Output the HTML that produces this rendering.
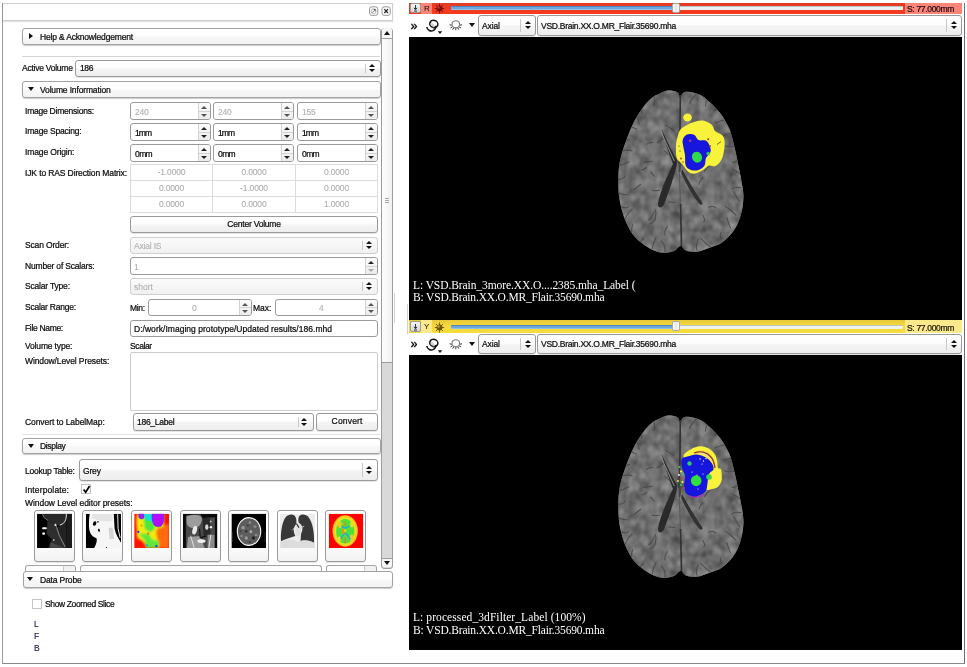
<!DOCTYPE html>
<html><head><meta charset="utf-8"><title>Volumes</title>
<style>
html,body{margin:0;padding:0;}
body{width:967px;height:667px;position:relative;overflow:hidden;background:#fff;font-family:"Liberation Sans",sans-serif;font-size:8.5px;letter-spacing:-0.17px;color:#0a0a0a;-webkit-text-stroke:0.22px #0a0a0a;}
.a{position:absolute;box-sizing:border-box;}
.t{position:absolute;white-space:nowrap;line-height:10px;}
.w{position:absolute;box-sizing:border-box;border:1px solid #9a9a9a;border-radius:3px;background:#fff;}
.btn{background:linear-gradient(#ffffff,#fdfdfd 45%,#f4f4f4 55%,#ededed);box-shadow:0 1px 0.5px rgba(0,0,0,0.10);}
.hdr{position:absolute;box-sizing:border-box;border:1px solid #a2a2a2;border-radius:3px;background:linear-gradient(#ffffff,#fefefe 45%,#f7f7f7 55%,#f3f3f3);box-shadow:0 1px 1px rgba(0,0,0,0.2);}
.dis{color:#b0b0b0;-webkit-text-stroke:0.1px #b0b0b0;}
.sp{position:absolute;right:0;top:0;bottom:0;width:11px;border-left:1px solid #d2d2d2;background:linear-gradient(#fcfcfc,#ececec);border-radius:0 2px 2px 0;}
.sp:before{content:"";position:absolute;left:2px;top:2.6px;border:3px solid transparent;border-top:0;border-bottom:3.3px solid #222;}
.sp:after{content:"";position:absolute;left:2px;bottom:2.4px;border:3px solid transparent;border-bottom:0;border-top:3.3px solid #222;}
.sp i{position:absolute;left:0;right:0;top:50%;height:1px;background:#d2d2d2;margin-top:-0.5px;}
.sp.d1:before{border-bottom-color:#555;}.sp.d1:after{border-top-color:#555;}
.sp.d2:after{border-top-color:#aaa;}
.cb{position:absolute;right:14px;top:3px;bottom:3px;width:1px;background:#c8c8c8;}
.cbu{position:absolute;right:5.5px;top:50%;margin-top:-4.4px;border:3px solid transparent;border-top:0;border-bottom:3.5px solid #111;}
.cbd{position:absolute;right:5.5px;top:50%;margin-top:0.9px;border:3px solid transparent;border-bottom:0;border-top:3.5px solid #111;}
.tb{background:linear-gradient(#fff,#fefefe 60%,#f2f2f2);}
.wd{border-color:#cfcfcf;background:linear-gradient(#fbfbfb,#f1f1f1);}
.cell{position:absolute;box-sizing:border-box;border-right:1px solid #dcdcdc;border-bottom:1px solid #dcdcdc;color:#adadad;-webkit-text-stroke:0.1px #adadad;text-align:center;line-height:15px;}
.vt{position:absolute;white-space:nowrap;color:#fff;-webkit-text-stroke:0;font-family:"Liberation Serif",serif;font-size:11.5px;letter-spacing:0;line-height:12px;}
#root{position:absolute;left:0;top:0;width:967px;height:667px;will-change:transform;background:#fff;overflow:hidden;}
</style></head><body><div id="root">

<!-- outer frame -->
<div class="a" style="left:2px;top:3px;width:963px;height:661px;border-left:1px solid #9a9a9a;border-bottom:1px solid #8a8a8a;border-right:1.5px solid #666b90;"></div>
<!-- dock title bar -->
<div class="a" style="left:3px;top:3px;width:390px;height:18px;border:1px solid #cfcfcf;border-left:0;box-shadow:0 1px 1px rgba(0,0,0,0.12);background:#fff;"></div>
<svg class="a" style="left:368px;top:5px;" width="24" height="12" viewBox="368 5 24 12">
 <rect x="369.500" y="6.800" width="8.300" height="8.600" rx="2.400" fill="#fbfbfb" stroke="#8e8e8e" stroke-width="0.900"/>
 <circle cx="373.600" cy="11.200" r="2.500" fill="none" stroke="#aaa" stroke-width="0.800"/>
 <path d="M372.300 12.600 L375.300 9.600 M373.600 9.500 H375.400 V11.300" fill="none" stroke="#666" stroke-width="0.900"/>
 <rect x="382" y="6.800" width="8.300" height="8.600" rx="2.400" fill="#fbfbfb" stroke="#8e8e8e" stroke-width="0.900"/>
 <path d="M384.300 9.200 L388 13 M388 9.200 L384.300 13" fill="none" stroke="#222" stroke-width="1.200"/>
</svg>

<!-- LEFT PANEL placeholder -->
<!-- LEFT PANEL -->
<div class="hdr" style="left:22px;top:28px;width:359px;height:17px;"></div>
<div class="a" style="left:29px;top:33.3px;border:3.5px solid transparent;border-right:0;border-left:4.4px solid #111;"></div>
<div class="t" style="left:40px;top:32px;letter-spacing:-0.18px;">Help &amp; Acknowledgement</div>
<div class="a" style="left:22px;top:55.500px;width:358px;height:1px;background:#d4d4d4;"></div>

<div class="t" style="left:22px;top:63px;letter-spacing:-0.25px;">Active Volume</div>
<div class="w btn" style="left:75px;top:60px;width:306px;height:17px;"><i class="cb"></i><i class="cbu"></i><i class="cbd"></i></div>
<div class="t" style="left:80px;top:63px;letter-spacing:-0.39px;">186</div>

<div class="hdr" style="left:22px;top:81px;width:359px;height:17px;"></div>
<div class="a" style="left:28.1px;top:87px;border:3.3px solid transparent;border-bottom:0;border-top:4.2px solid #111;"></div>
<div class="t" style="left:40px;top:84.5px;letter-spacing:-0.15px;">Volume Information</div>

<div class="t" style="left:25px;top:105.5px;letter-spacing:-0.23px;">Image Dimensions:</div>
<div class="w" style="left:130px;top:102px;width:81px;height:18px;"><span class="sp d1"><i></i></span></div>
<div class="w" style="left:213px;top:102px;width:81px;height:18px;"><span class="sp d1"><i></i></span></div>
<div class="w" style="left:297px;top:102px;width:81px;height:18px;"><span class="sp d1"><i></i></span></div>
<div class="t dis" style="left:135px;top:107px;letter-spacing:-0.26px;">240</div>
<div class="t dis" style="left:218px;top:107px;letter-spacing:-0.26px;">240</div>
<div class="t dis" style="left:302px;top:107px;letter-spacing:-0.26px;">155</div>

<div class="t" style="left:25px;top:126.3px;letter-spacing:-0.18px;">Image Spacing:</div>
<div class="w" style="left:130px;top:123px;width:81px;height:18px;"><span class="sp"><i></i></span></div>
<div class="w" style="left:213px;top:123px;width:81px;height:18px;"><span class="sp"><i></i></span></div>
<div class="w" style="left:297px;top:123px;width:81px;height:18px;"><span class="sp"><i></i></span></div>
<div class="t" style="left:135px;top:128px;letter-spacing:-0.90px;">1mm</div>
<div class="t" style="left:218px;top:128px;letter-spacing:-0.90px;">1mm</div>
<div class="t" style="left:302px;top:128px;letter-spacing:-0.90px;">1mm</div>

<div class="t" style="left:25px;top:147px;letter-spacing:-0.13px;">Image Origin:</div>
<div class="w" style="left:130px;top:144px;width:81px;height:18px;"><span class="sp"><i></i></span></div>
<div class="w" style="left:213px;top:144px;width:81px;height:18px;"><span class="sp"><i></i></span></div>
<div class="w" style="left:297px;top:144px;width:81px;height:18px;"><span class="sp"><i></i></span></div>
<div class="t" style="left:135px;top:148.6px;letter-spacing:-0.60px;">0mm</div>
<div class="t" style="left:218px;top:148.6px;letter-spacing:-0.60px;">0mm</div>
<div class="t" style="left:302px;top:148.6px;letter-spacing:-0.60px;">0mm</div>

<div class="t" style="left:25px;top:168px;letter-spacing:-0.12px;">IJK to RAS Direction Matrix:</div>
<div class="a" style="left:130px;top:164.300px;width:248px;height:49px;border-left:1px solid #dcdcdc;border-top:1px solid #dcdcdc;background:#fff;">
 <div class="cell" style="left:0;top:0;width:82px;height:16px;">-1.0000</div><div class="cell" style="left:82px;top:0;width:83px;height:16px;">0.0000</div><div class="cell" style="left:165px;top:0;width:82px;height:16px;">0.0000</div>
 <div class="cell" style="left:0;top:16px;width:82px;height:16px;">0.0000</div><div class="cell" style="left:82px;top:16px;width:83px;height:16px;">-1.0000</div><div class="cell" style="left:165px;top:16px;width:82px;height:16px;">0.0000</div>
 <div class="cell" style="left:0;top:32px;width:82px;height:16px;">0.0000</div><div class="cell" style="left:82px;top:32px;width:83px;height:16px;">0.0000</div><div class="cell" style="left:165px;top:32px;width:82px;height:16px;">1.0000</div>
</div>

<div class="w btn" style="left:130px;top:216px;width:248px;height:17px;text-align:center;line-height:15px;letter-spacing:-0.22px;">Center Volume</div>

<div class="t" style="left:25px;top:239.5px;letter-spacing:-0.16px;">Scan Order:</div>
<div class="w wd" style="left:130px;top:237px;width:248px;height:17px;"><i class="cb"></i><i class="cbu"></i><i class="cbd"></i></div>
<div class="t dis" style="left:134px;top:241px;letter-spacing:-0.19px;">Axial IS</div>

<div class="t" style="left:25px;top:260.5px;letter-spacing:-0.18px;">Number of Scalars:</div>
<div class="w" style="left:130px;top:257px;width:248px;height:18px;"><span class="sp d2"><i></i></span></div>
<div class="t dis" style="left:134px;top:262px;">1</div>

<div class="t" style="left:25px;top:281px;letter-spacing:-0.19px;">Scalar Type:</div>
<div class="w wd" style="left:130px;top:278px;width:248px;height:17px;"><i class="cb"></i><i class="cbu"></i><i class="cbd"></i></div>
<div class="t dis" style="left:134px;top:282px;letter-spacing:0.02px;">short</div>

<div class="t" style="left:25px;top:302.3px;letter-spacing:-0.23px;">Scalar Range:</div>
<div class="t" style="left:130px;top:302.5px;letter-spacing:-0.32px;">Min:</div>
<div class="w" style="left:148px;top:299px;width:103.600px;height:17px;"><span class="sp d1"><i></i></span></div>
<div class="t dis" style="left:192px;top:303px;">0</div>
<div class="t" style="left:253px;top:302.5px;letter-spacing:-0.06px;">Max:</div>
<div class="w" style="left:274.500px;top:299px;width:103.500px;height:17px;"><span class="sp d1"><i></i></span></div>
<div class="t dis" style="left:319px;top:303px;">4</div>

<div class="t" style="left:25px;top:322.7px;letter-spacing:-0.32px;">File Name:</div>
<div class="w" style="left:130px;top:320px;width:248px;height:17px;"></div>
<div class="t" style="left:134px;top:324px;letter-spacing:0.03px;">D:/work/Imaging prototype/Updated results/186.mhd</div>

<div class="t" style="left:25px;top:340.7px;letter-spacing:-0.16px;">Volume type:</div>
<div class="t" style="left:130px;top:340.7px;letter-spacing:-0.38px;">Scalar</div>

<div class="t" style="left:25px;top:356px;letter-spacing:-0.11px;">Window/Level Presets:</div>
<div class="a" style="left:130px;top:352px;width:248px;height:59px;border:1px solid #cdcdcd;border-radius:2px;background:#fff;"></div>

<div class="t" style="left:25px;top:417px;letter-spacing:-0.08px;">Convert to LabelMap:</div>
<div class="w btn" style="left:133px;top:413.300px;width:180.500px;height:17.300px;"><i class="cb"></i><i class="cbu"></i><i class="cbd"></i></div>
<div class="t" style="left:137px;top:417px;letter-spacing:-0.27px;">186_Label</div>
<div class="w btn" style="left:316.400px;top:413.300px;width:61.400px;height:17.300px;text-align:center;line-height:15.500px;letter-spacing:0.18px;">Convert</div>

<div class="a" style="left:22px;top:434px;width:358px;height:1px;background:#e2e2e2;"></div>
<div class="hdr" style="left:22px;top:437.500px;width:359px;height:16px;"></div>
<div class="a" style="left:27.6px;top:443.8px;border:3.3px solid transparent;border-bottom:0;border-top:4.2px solid #111;"></div>
<div class="t" style="left:40px;top:441px;letter-spacing:-0.34px;">Display</div>

<div class="t" style="left:25px;top:465.5px;letter-spacing:-0.24px;">Lookup Table:</div>
<div class="w btn" style="left:79px;top:459px;width:299px;height:22px;"><i class="cb"></i><i class="cbu"></i><i class="cbd"></i></div>
<div class="t" style="left:83px;top:465.5px;letter-spacing:-0.18px;">Grey</div>

<div class="t" style="left:25px;top:484.5px;letter-spacing:0.13px;">Interpolate:</div>
<div class="a" style="left:80.500px;top:484.300px;width:10px;height:10px;border:1px solid #c2c2c2;background:#fff;"></div>
<svg class="a" style="left:80.500px;top:484px;" width="11" height="11" viewBox="0 0 11 11"><path d="M2.600 5.400 L4.700 8.200 L8.600 2" fill="none" stroke="#000" stroke-width="1.700"/></svg>
<div class="t" style="left:25px;top:498px;letter-spacing:-0.06px;">Window Level editor presets:</div>
<!-- thumbnails -->
<div class="w btn tb" style="left:34px;top:510px;width:41px;height:52px;"></div>
<div class="w btn tb" style="left:82px;top:510px;width:41px;height:52px;"></div>
<div class="w btn tb" style="left:131px;top:510px;width:41px;height:52px;"></div>
<div class="w btn tb" style="left:180px;top:510px;width:41px;height:52px;"></div>
<div class="w btn tb" style="left:228px;top:510px;width:41px;height:52px;"></div>
<div class="w btn tb" style="left:277px;top:510px;width:41px;height:52px;"></div>
<div class="w btn tb" style="left:325px;top:510px;width:41px;height:52px;"></div>
<svg class="a" style="left:0;top:500px;" width="400" height="60" viewBox="0 500 400 60">
 <defs>
  <filter id="tb1" x="-5%" y="-5%" width="110%" height="110%"><feGaussianBlur stdDeviation="4"/></filter>
  <filter id="tb2" x="-5%" y="-5%" width="110%" height="110%"><feGaussianBlur stdDeviation="9"/></filter>
  <clipPath id="k1"><rect x="68" y="55" width="337" height="333"/></clipPath>
  <clipPath id="k2"><rect x="540" y="55" width="340" height="333"/></clipPath>
  <clipPath id="k3"><rect x="60" y="55" width="337" height="333"/></clipPath>
  <clipPath id="k4"><rect x="530" y="55" width="335" height="333"/></clipPath>
  <clipPath id="k5"><rect x="72" y="55" width="335" height="333"/></clipPath>
  <clipPath id="k6"><rect x="540" y="55" width="340" height="333"/></clipPath>
  <clipPath id="k7"><rect x="278" y="55" width="334" height="333"/></clipPath>
 </defs>
 <!-- 1+2 -->
 <g transform="translate(30 508) scale(0.10341)">
  <g clip-path="url(#k1)"><rect x="68" y="55" width="337" height="333" fill="#000"/>
   <g filter="url(#tb1)">
    <path d="M120 55 L350 55 C352 100 345 130 300 165 L250 172 L170 122 L130 90Z" fill="#2b2b2b"/>
    <path d="M170 120 L250 172 L285 270 L345 388 L180 388 L210 300 L160 250Z" fill="#2e2e2e"/>
    <rect x="352" y="55" width="53" height="333" fill="#1c1c1c"/><path d="M290 168 L350 125 L352 388 L345 388 L282 262 L258 190Z" fill="#242424"/>
    <path d="M352 55 C352 105 345 128 318 152 L288 166" fill="none" stroke="#f0f0f0" stroke-width="9"/>
    <path d="M120 58 L135 92 L175 122" fill="none" stroke="#999" stroke-width="6"/>
    <path d="M245 150 L258 190 L282 262 L340 378" fill="none" stroke="#b8b8b8" stroke-width="7"/>
    <rect x="118" y="186" width="44" height="20" rx="8" fill="#fff"/><rect x="118" y="236" width="28" height="22" rx="8" fill="#fff"/>
    <circle cx="230" cy="310" r="8" fill="#ddd"/><circle cx="245" cy="165" r="10" fill="#eee"/>
    <path d="M200 330 L330 385 L190 385Z" fill="#484848"/>
   </g></g>
  <g clip-path="url(#k2)"><rect x="540" y="55" width="340" height="333" fill="#f6f6f6"/>
   <g filter="url(#tb1)">
    <path d="M600 55 L800 55 L800 120 C740 140 660 120 600 100Z" fill="#e4e4e4"/>
    <path d="M760 190 L800 190 L815 300 L770 300Z" fill="#d4d4d4"/>
    <path d="M540 55 L578 55 C568 100 570 160 572 200 C580 250 600 275 640 290 C655 310 640 350 620 388 L540 388Z" fill="#000"/>
    <path d="M810 55 L880 55 L880 335 C860 300 830 260 818 200Z" fill="#000"/>
    <path d="M848 60 L852 200 L872 290" fill="none" stroke="#fff" stroke-width="9"/>
    <ellipse cx="625" cy="150" rx="16" ry="22" fill="#000" transform="rotate(20 625 150)"/><circle cx="657" cy="134" r="8" fill="#111"/>
    <ellipse cx="667" cy="215" rx="10" ry="15" fill="#111" transform="rotate(-20 667 215)"/><circle cx="740" cy="383" r="7" fill="#222"/>
   </g></g>
 </g>
 <!-- 3+4 -->
 <g transform="translate(128 508) scale(0.10341)">
  <g clip-path="url(#k3)"><rect x="60" y="55" width="337" height="333" fill="#ff1200"/>
   <g filter="url(#tb2)">
    <path d="M270 190 L397 150 L397 388 L300 388Z" fill="#ff6a10"/>
    <path d="M88 60 L350 60 L345 180 L280 200 C262 250 300 320 300 388 L175 388 C170 330 120 310 90 290 C80 250 95 230 85 200 C80 150 80 100 88 60Z" fill="#f4ea10"/>
    <path d="M150 100 L250 100 L262 200 L215 240 L160 200Z" fill="#4ee83a"/>
    <path d="M100 250 L200 245 L230 300 L300 320 L295 388 L180 388 L160 310Z" fill="#5ee83a"/>
   </g>
   <g filter="url(#tb1)">
    <path d="M150 58 L240 58 L250 130 L170 120Z" fill="#18e0d0"/>
    <path d="M105 55 L150 55 L155 95 C140 112 112 108 105 90Z" fill="#b410ff" stroke="#2030ff" stroke-width="6"/>
    <path d="M235 55 L345 55 C350 100 345 150 320 175 C290 190 255 180 245 150 C235 120 230 90 235 55Z" fill="#b410ff" stroke="#2030ff" stroke-width="6"/>
    <circle cx="100" cy="230" r="11" fill="#1828ff"/><circle cx="185" cy="360" r="10" fill="#10a0ff"/><circle cx="275" cy="368" r="11" fill="#1838ff"/>
    <circle cx="130" cy="170" r="10" fill="#ff8a10"/><circle cx="195" cy="248" r="10" fill="#ff7010"/>
   </g></g>
  <g clip-path="url(#k4)"><rect x="530" y="55" width="335" height="333" fill="#0a0a0a"/>
   <g filter="url(#tb1)">
    <path d="M560 70 L700 60 L720 100 L840 90 L842 388 L560 388Z" fill="#4a4a4a"/>
    <path d="M565 90 C580 60 690 55 712 90 C720 130 700 180 660 190 C620 200 580 190 568 150Z" fill="#9c9c9c"/>
    <path d="M720 100 L790 90 L800 250 L730 270Z" fill="#2a2a2a"/>
    <path d="M580 280 L700 270 L740 388 L570 388Z" fill="#9a9a9a"/><path d="M770 260 L835 260 L835 388 L770 388Z" fill="#8a8a8a"/>
    <ellipse cx="645" cy="215" rx="22" ry="42" fill="#e8e8e8" transform="rotate(15 645 215)"/>
    <ellipse cx="762" cy="185" rx="16" ry="28" fill="#d8d8d8"/><circle cx="802" cy="185" r="12" fill="#f4f4f4"/><circle cx="800" cy="130" r="10" fill="#bbb"/>
    <ellipse cx="710" cy="320" rx="40" ry="18" fill="#f0f0f0"/><path d="M700 290 L760 270" stroke="#111" stroke-width="14"/>
    <path d="M605 268 L640 385 M802 258 L782 385" fill="none" stroke="#e4e4e4" stroke-width="9"/>
    <path d="M690 200 L700 290" stroke="#1a1a1a" stroke-width="14"/>
   </g></g>
 </g>
 <!-- 5+6 -->
 <g transform="translate(224 508) scale(0.10341)">
  <g clip-path="url(#k5)"><rect x="72" y="55" width="335" height="333" fill="#000"/>
   <ellipse cx="242" cy="227" rx="113" ry="134" fill="#5e5e5e" stroke="#fafafa" stroke-width="11"/>
   <g filter="url(#tb1)">
    <circle cx="185" cy="190" r="16" fill="#9a9a9a"/><circle cx="260" cy="230" r="14" fill="#a8a8a8"/><circle cx="215" cy="290" r="16" fill="#9a9a9a"/><circle cx="300" cy="180" r="14" fill="#8a8a8a"/><circle cx="250" cy="140" r="12" fill="#909090"/><circle cx="170" cy="270" r="12" fill="#8a8a8a"/><circle cx="310" cy="260" r="12" fill="#8c8c8c"/>
    <circle cx="285" cy="290" r="16" fill="#222"/><circle cx="215" cy="225" r="12" fill="#333"/><circle cx="230" cy="170" r="10" fill="#3a3a3a"/><circle cx="160" cy="225" r="10" fill="#3a3a3a"/><circle cx="250" cy="330" r="10" fill="#383838"/>
    <rect x="76" y="230" width="10" height="100" fill="#222"/><rect x="392" y="230" width="10" height="100" fill="#222"/>
   </g></g>
  <g clip-path="url(#k6)"><rect x="540" y="55" width="340" height="333" fill="#ececec"/>
   <g filter="url(#tb1)">
    <path d="M650 62 C690 60 705 100 700 150 C680 180 660 210 690 270 C640 285 590 300 552 322 C545 250 560 130 600 85 C615 70 630 63 650 62Z" fill="#383838"/>
    <path d="M765 62 C720 60 715 100 722 140 C760 170 770 200 745 250 L740 325 C790 300 840 320 870 335 C875 250 860 140 815 85 C800 70 785 63 765 62Z" fill="#383838"/>
    <path d="M700 140 L690 270 L740 270 L745 160Z" fill="#e0e0e0"/>
    <path d="M700 150 L725 190" stroke="#222" stroke-width="10"/>
    <path d="M660 215 L700 175 M740 195 L775 175" stroke="#ddd" stroke-width="8"/>
    <path d="M545 330 C600 300 680 290 710 330 C760 300 830 310 875 340 L875 388 L545 388Z" fill="#dcdcdc"/>
   </g></g>
 </g>
 <!-- 7 -->
 <g transform="translate(300 508) scale(0.10341)">
  <g clip-path="url(#k7)"><rect x="278" y="55" width="334" height="333" fill="#ff0000"/>
   <g filter="url(#tb1)">
    <ellipse cx="437" cy="222" rx="122" ry="152" fill="#f4c818"/>
    <ellipse cx="437" cy="222" rx="108" ry="138" fill="#e8e020" stroke="#ffd020" stroke-width="10" stroke-dasharray="14 10"/>
    <ellipse cx="437" cy="225" rx="88" ry="118" fill="#50e03c"/>
    <ellipse cx="385" cy="160" rx="20" ry="34" fill="#f0cc20"/><ellipse cx="500" cy="290" rx="20" ry="34" fill="#f0cc20"/><ellipse cx="500" cy="160" rx="16" ry="28" fill="#f0dc20"/><ellipse cx="380" cy="300" rx="16" ry="28" fill="#f0dc20"/>
    <path d="M400 175 C430 200 445 200 475 175 M395 300 C425 230 450 230 485 305" fill="none" stroke="#18a8f0" stroke-width="13"/>
    <path d="M437 130 L437 180 M437 280 L437 340" stroke="#f07818" stroke-width="10"/>
    <ellipse cx="420" cy="225" rx="14" ry="30" fill="#f09018"/><circle cx="437" cy="218" r="10" fill="#f4ec20"/>
   </g></g>
 </g>
</svg>

<!-- clipped next row -->
<div class="a" style="left:25px;top:565px;width:50.500px;height:7px;border:1px solid #a4a4a4;border-bottom:0;border-radius:3px 3px 0 0;background:#fdfdfd;"></div>
<div class="a" style="left:63px;top:566px;width:11.500px;height:5px;border-left:1px solid #ccc;background:#f1f1f1;border-radius:0 2px 0 0;"></div>
<div class="a" style="left:80px;top:565px;width:242px;height:7px;border:1px solid #a4a4a4;border-bottom:0;border-radius:3px 3px 0 0;background:#fdfdfd;"></div>
<div class="a" style="left:326px;top:565px;width:50.500px;height:7px;border:1px solid #a4a4a4;border-bottom:0;border-radius:3px 3px 0 0;background:#fdfdfd;"></div>
<div class="a" style="left:364px;top:566px;width:11.500px;height:5px;border-left:1px solid #ccc;background:#f1f1f1;border-radius:0 2px 0 0;"></div>

<!-- scrollbar -->
<div class="a" style="left:381px;top:27.500px;width:12px;height:541px;border:1px solid #9c9c9c;border-radius:3px;background:#d9d9d9;"></div>
<div class="a" style="left:382px;top:38px;width:10px;height:325px;background:linear-gradient(90deg,#fdfdfd,#f1f1f1);border-top:1px solid #9c9c9c;border-bottom:1px solid #9c9c9c;"></div>
<div class="a" style="left:382px;top:28px;width:10px;height:10px;background:#f6f6f6;border-radius:2px 2px 0 0;"></div>
<div class="a" style="left:382px;top:558px;width:10px;height:9px;background:#f6f6f6;border-top:1px solid #9c9c9c;border-radius:0 0 2px 2px;"></div>
<div class="a" style="left:384px;top:31px;border:3px solid transparent;border-top:0;border-bottom:4px solid #111;"></div>
<div class="a" style="left:384px;top:561px;border:3px solid transparent;border-bottom:0;border-top:4px solid #111;"></div>
<div class="a" style="left:385px;top:198px;width:4px;height:1px;background:#aaa;box-shadow:0 2px 0 #aaa,0 4px 0 #aaa;"></div>
<div class="a" style="left:394px;top:293px;width:1px;height:30px;background:#cfcfcf;"></div>
<div class="a" style="left:407px;top:304px;width:1px;height:30px;background:#d0d0d0;"></div>

<!-- Data probe -->
<div class="hdr" style="left:22.500px;top:570.500px;width:370.500px;height:17.300px;"></div>
<div class="a" style="left:27.4px;top:577px;border:3.3px solid transparent;border-bottom:0;border-top:4.2px solid #111;"></div>
<div class="t" style="left:40px;top:575px;letter-spacing:-0.14px;">Data Probe</div>
<div class="a" style="left:32px;top:599px;width:10px;height:10px;border:1px solid #c4c4c4;background:#fff;"></div>
<div class="t" style="left:45px;top:599px;letter-spacing:-0.37px;">Show Zoomed Slice</div>
<div class="t" style="left:34px;top:618.8px;color:#14144a;-webkit-text-stroke:0.12px #14144a;">L</div>
<div class="t" style="left:34px;top:630.6px;color:#14144a;-webkit-text-stroke:0.12px #14144a;">F</div>
<div class="t" style="left:34px;top:643px;color:#14144a;-webkit-text-stroke:0.12px #14144a;">B</div>


<!-- RIGHT PANEL placeholder -->
<!-- RIGHT PANEL -->
<svg width="0" height="0" style="position:absolute">
 <defs>
  <filter id="tex" x="0" y="0" width="100%" height="100%" color-interpolation-filters="sRGB">
   <feTurbulence type="fractalNoise" baseFrequency="0.11 0.09" numOctaves="2" seed="11" result="n"/>
   <feColorMatrix in="n" type="matrix" values="0.36 0 0 0 0.25  0.36 0 0 0 0.25  0.36 0 0 0 0.25  0 0 0 0 1" result="g"/>
   <feComposite in="g" in2="SourceAlpha" operator="in" result="gg"/>
   <feGaussianBlur in="gg" stdDeviation="0.5"/>
  </filter>
  <filter id="sb" x="-5%" y="-5%" width="110%" height="110%"><feGaussianBlur stdDeviation="0.7"/></filter>
  <filter id="sb2" x="-20%" y="-20%" width="140%" height="140%"><feGaussianBlur stdDeviation="1.6"/></filter>
  <clipPath id="bc"><path d="M680.3 94.5 C678.9 94.4 678.0 92.2 676.0 91.5 C674.0 90.8 670.4 90.3 668.0 90.5 C665.6 90.7 664.3 91.4 661.8 92.5 C659.3 93.6 655.7 95.0 653.0 97.0 C650.3 99.0 648.5 100.4 645.5 104.3 C642.5 108.2 637.9 114.6 634.7 120.5 C631.6 126.4 629.1 132.8 626.6 139.5 C624.1 146.2 621.3 153.8 619.9 161.0 C618.5 168.2 618.3 175.9 618.3 182.7 C618.3 189.5 618.7 195.3 619.9 201.6 C621.1 207.9 622.8 214.6 625.3 220.5 C627.8 226.4 630.9 232.3 634.7 236.8 C638.5 241.3 644.2 245.0 648.2 247.6 C652.2 250.2 655.7 251.4 659.0 252.2 C662.3 253.0 665.3 252.9 668.0 252.6 C670.7 252.3 672.9 251.6 675.0 250.5 C677.1 249.4 678.8 246.1 680.5 246.0 C682.2 245.9 683.4 249.1 685.0 250.0 C686.6 250.9 687.8 251.3 690.0 251.6 C692.2 251.8 695.3 251.9 698.0 251.5 C700.7 251.1 703.5 249.8 706.2 248.9 C709.0 248.0 711.8 247.1 714.5 246.0 C717.2 244.9 719.3 244.6 722.4 242.2 C725.5 239.8 730.3 235.5 733.2 231.4 C736.1 227.3 738.3 222.8 740.0 217.8 C741.7 212.8 742.8 206.6 743.2 201.6 C743.7 196.6 743.5 193.9 742.7 188.1 C741.9 182.2 740.0 173.2 738.6 166.5 C737.2 159.8 736.2 153.9 734.6 147.6 C733.0 141.3 731.7 134.5 729.2 128.6 C726.7 122.7 723.5 117.4 719.7 112.4 C715.9 107.5 709.8 102.0 706.2 98.9 C702.6 95.8 700.7 95.2 698.0 94.0 C695.3 92.8 692.2 92.3 690.0 92.0 C687.8 91.7 686.1 91.6 684.5 92.0 C682.9 92.4 681.7 94.6 680.3 94.5 Z"/></clipPath>
  <g id="brain">
    <g filter="url(#sb)">
    <path d="M680.3 94.5 C678.9 94.4 678.0 92.2 676.0 91.5 C674.0 90.8 670.4 90.3 668.0 90.5 C665.6 90.7 664.3 91.4 661.8 92.5 C659.3 93.6 655.7 95.0 653.0 97.0 C650.3 99.0 648.5 100.4 645.5 104.3 C642.5 108.2 637.9 114.6 634.7 120.5 C631.6 126.4 629.1 132.8 626.6 139.5 C624.1 146.2 621.3 153.8 619.9 161.0 C618.5 168.2 618.3 175.9 618.3 182.7 C618.3 189.5 618.7 195.3 619.9 201.6 C621.1 207.9 622.8 214.6 625.3 220.5 C627.8 226.4 630.9 232.3 634.7 236.8 C638.5 241.3 644.2 245.0 648.2 247.6 C652.2 250.2 655.7 251.4 659.0 252.2 C662.3 253.0 665.3 252.9 668.0 252.6 C670.7 252.3 672.9 251.6 675.0 250.5 C677.1 249.4 678.8 246.1 680.5 246.0 C682.2 245.9 683.4 249.1 685.0 250.0 C686.6 250.9 687.8 251.3 690.0 251.6 C692.2 251.8 695.3 251.9 698.0 251.5 C700.7 251.1 703.5 249.8 706.2 248.9 C709.0 248.0 711.8 247.1 714.5 246.0 C717.2 244.9 719.3 244.6 722.4 242.2 C725.5 239.8 730.3 235.5 733.2 231.4 C736.1 227.3 738.3 222.8 740.0 217.8 C741.7 212.8 742.8 206.6 743.2 201.6 C743.7 196.6 743.5 193.9 742.7 188.1 C741.9 182.2 740.0 173.2 738.6 166.5 C737.2 159.8 736.2 153.9 734.6 147.6 C733.0 141.3 731.7 134.5 729.2 128.6 C726.7 122.7 723.5 117.4 719.7 112.4 C715.9 107.5 709.8 102.0 706.2 98.9 C702.6 95.8 700.7 95.2 698.0 94.0 C695.3 92.8 692.2 92.3 690.0 92.0 C687.8 91.7 686.1 91.6 684.5 92.0 C682.9 92.4 681.7 94.6 680.3 94.5 Z" fill="#6a6a6a"/>
    </g>
    <g filter="url(#tex)">
    <path d="M680.3 94.5 C678.9 94.4 678.0 92.2 676.0 91.5 C674.0 90.8 670.4 90.3 668.0 90.5 C665.6 90.7 664.3 91.4 661.8 92.5 C659.3 93.6 655.7 95.0 653.0 97.0 C650.3 99.0 648.5 100.4 645.5 104.3 C642.5 108.2 637.9 114.6 634.7 120.5 C631.6 126.4 629.1 132.8 626.6 139.5 C624.1 146.2 621.3 153.8 619.9 161.0 C618.5 168.2 618.3 175.9 618.3 182.7 C618.3 189.5 618.7 195.3 619.9 201.6 C621.1 207.9 622.8 214.6 625.3 220.5 C627.8 226.4 630.9 232.3 634.7 236.8 C638.5 241.3 644.2 245.0 648.2 247.6 C652.2 250.2 655.7 251.4 659.0 252.2 C662.3 253.0 665.3 252.9 668.0 252.6 C670.7 252.3 672.9 251.6 675.0 250.5 C677.1 249.4 678.8 246.1 680.5 246.0 C682.2 245.9 683.4 249.1 685.0 250.0 C686.6 250.9 687.8 251.3 690.0 251.6 C692.2 251.8 695.3 251.9 698.0 251.5 C700.7 251.1 703.5 249.8 706.2 248.9 C709.0 248.0 711.8 247.1 714.5 246.0 C717.2 244.9 719.3 244.6 722.4 242.2 C725.5 239.8 730.3 235.5 733.2 231.4 C736.1 227.3 738.3 222.8 740.0 217.8 C741.7 212.8 742.8 206.6 743.2 201.6 C743.7 196.6 743.5 193.9 742.7 188.1 C741.9 182.2 740.0 173.2 738.6 166.5 C737.2 159.8 736.2 153.9 734.6 147.6 C733.0 141.3 731.7 134.5 729.2 128.6 C726.7 122.7 723.5 117.4 719.7 112.4 C715.9 107.5 709.8 102.0 706.2 98.9 C702.6 95.8 700.7 95.2 698.0 94.0 C695.3 92.8 692.2 92.3 690.0 92.0 C687.8 91.7 686.1 91.6 684.5 92.0 C682.9 92.4 681.7 94.6 680.3 94.5 Z" fill="#fff"/>
    </g>
    <g filter="url(#sb2)" opacity="0.5">
     <path d="M650 125 C660 140 655 165 650 185 C648 200 655 215 662 225 M700 120 C712 140 715 160 712 180 C710 200 705 215 698 228" fill="none" stroke="#828282" stroke-width="7"/>
    </g>
    <g clip-path="url(#bc)"><g filter="url(#sb)" opacity="0.85"><path d="M653.7 94.5 Q655.3 102.2 654.0 105.5 M642.1 101.7 Q639.7 107.5 641.9 113.6 M633.0 112.1 Q638.1 116.2 639.2 124.1 M627.6 124.9 Q632.3 127.3 636.5 129.0 M623.5 138.1 Q625.4 140.8 629.5 139.4 M620.1 151.5 Q627.6 149.3 632.2 150.6 M618.8 165.3 Q621.5 165.4 629.1 161.7 M618.1 179.2 Q623.9 179.3 625.0 175.8 M618.9 193.0 Q623.2 194.8 627.1 194.8 M620.8 206.7 Q625.6 209.0 628.5 206.6 M624.6 220.0 Q627.7 212.9 632.1 209.2 M631.6 231.8 Q631.2 228.8 632.7 224.7 M639.8 242.9 Q641.0 239.7 643.8 238.4 M651.9 249.6 Q652.9 243.6 655.8 237.7 M665.1 251.9 Q665.4 244.1 661.0 241.0 M696.7 93.6 Q690.8 99.9 689.6 103.3 M709.8 98.4 Q705.2 100.1 705.6 106.3 M720.8 107.2 Q715.9 110.1 714.1 110.5 M728.0 119.0 Q720.8 120.3 715.2 122.9 M733.3 132.0 Q726.4 134.8 723.5 135.1 M736.6 145.7 Q728.1 147.9 724.2 145.6 M738.3 159.6 Q735.8 163.0 732.1 162.2 M739.8 173.6 Q736.3 170.4 732.3 169.2 M740.8 187.6 Q734.5 186.5 732.4 188.8 M739.5 201.6 Q734.9 194.3 733.7 191.6 M736.0 215.1 Q730.1 209.4 725.3 206.3 M730.4 227.9 Q728.4 222.5 726.7 217.8 M721.7 238.9 Q719.1 235.7 721.2 232.5 M710.2 246.9 Q706.7 244.9 700.8 238.4 M697.0 250.3 Q695.7 244.5 698.3 239.3 M702.6 215.3 Q706.1 220.7 703.6 222.0 M709.5 165.8 Q706.7 167.5 704.2 171.7 M659.5 190.1 Q658.6 191.0 652.2 190.4 M650.8 172.2 Q654.4 176.5 654.5 176.3 M654.2 211.7 Q652.4 217.2 648.7 219.6 M655.0 209.3 Q656.8 213.8 655.3 216.0 M667.5 226.7 Q663.5 231.2 665.3 235.3 M640.8 184.2 Q636.3 187.7 633.7 189.5 M655.6 215.4 Q655.6 222.3 649.9 223.8 M646.6 167.0 Q646.6 168.4 641.4 170.0 M665.7 125.6 Q671.4 128.5 673.7 130.4 M663.8 137.1 Q661.3 141.3 657.1 142.8 M702.7 177.6 Q699.2 182.1 699.2 184.4 M664.5 151.0 Q664.8 151.4 670.5 156.1 M668.9 202.1 Q671.8 201.7 675.1 202.7 M653.1 142.5 Q647.0 142.9 646.9 144.4 M708.7 207.2 Q713.0 205.2 715.9 208.0 M652.0 161.4 Q649.7 161.4 643.5 162.5 M692.6 128.3 Q696.4 130.3 699.1 131.4" fill="none" stroke="#484848" stroke-width="1.100" stroke-linecap="round"/></g></g>
    <path d="M677.500 89 L683.500 89 L680.300 98.500Z" fill="#000" filter="url(#sb)"/><path d="M678 254 L685 254 L681.300 245Z" fill="#000" filter="url(#sb)"/>
    <g filter="url(#sb)">
     <path d="M680.300 95 L680 130 L679 163 M680.500 204 L681.500 246" fill="none" stroke="#303030" stroke-width="1.600"/><path d="M679 163 L680.500 204" fill="none" stroke="#5a5a5a" stroke-width="1.200"/>
     <path d="M661.500 128.500 C665 138 671.500 150 677 160 L676.800 165 C673.500 178 669 192 664 204.500 C662 208.500 657.500 208.500 658 203.500 C660 192 666.500 177 673 164 C668.500 152 664 140 661.500 128.500Z" fill="#2c2c2c"/>
     <path d="M662.500 130 C666.500 140 672 151 676 160" fill="none" stroke="#909090" stroke-width="1" transform="translate(-1.600 1.200)"/>
     <path d="M682 169 C688 180 695 192 702 202 C703.500 205 701 205.500 699 203.500 C692.500 195 686 184 681.200 173Z" fill="#303030"/>
     <path d="M678 152 C680 158 680.500 164 679.500 172" fill="none" stroke="#444" stroke-width="2"/>
    </g>
  </g>
 </defs>
</svg>

<!-- slice 1 : Red -->
<div class="a" style="left:409px;top:3px;width:553.400px;height:10.700px;background:linear-gradient(#e03c26,#f03a22 40%,#f63a20);"></div>
<div class="a" style="left:421px;top:3px;width:11px;height:10.700px;background:#fb8678;"></div>
<div class="a" style="left:905px;top:3px;width:57.400px;height:10.700px;background:#fb8678;"></div>
<div class="a" style="left:410px;top:3px;width:11px;height:10px;border:1px solid #9a9a9a;border-radius:2px;background:linear-gradient(#f4f4f4,#d8d8d8);"></div>
<svg class="a" style="left:410px;top:3px;" width="11" height="10" viewBox="0 0 11 10"><path d="M5.500 2 V6 M4 4.800 L5.500 6.800 L7 4.800 M4 8 H7" fill="none" stroke="#222" stroke-width="0.900"/></svg>
<div class="t" style="left:424px;top:3.500px;font-size:8px;line-height:10px;color:#140408;-webkit-text-stroke:0;">R</div>
<svg class="a" style="left:434px;top:3px;" width="11" height="11" viewBox="0 0 11 11"><g stroke="#8a1408" stroke-width="1"><path d="M5.500 0.500 V10.500 M0.800 5.500 H10.200 M2 2 L9 9 M9 2 L2 9"/></g><circle cx="5.500" cy="5.500" r="3" fill="#7c0e06"/><circle cx="4.500" cy="4.500" r="1.200" fill="#c43a2a"/></svg>
<div class="a" style="left:451px;top:6px;width:452px;height:4px;background:#e9f1f1;border-top:1px solid #b9c6c8;border-radius:1px;"></div>
<div class="a" style="left:451px;top:6px;width:224px;height:4px;background:#6ca8dc;border-top:1px solid #4b86c2;border-bottom:1px solid #8ec0ea;box-sizing:border-box;border-radius:1px;"></div>
<div class="a" style="left:671.600px;top:3.200px;width:8px;height:10px;border:1px solid #a9a9a9;border-radius:2px;background:linear-gradient(90deg,#fff,#e4e4e4 50%,#fff);"></div>
<div class="t" style="left:907px;top:4px;font-size:8.500px;color:#2a0a20;letter-spacing:-0.32px;">S: 77.000mm</div>

<div class="t" style="left:410.6px;top:19.7px;font-size:12.5px;line-height:12px;letter-spacing:0;color:#000;-webkit-text-stroke:0.3px #000;">»</div>
<svg class="a" style="left:424px;top:19px;" width="20" height="16" viewBox="424 19 20 16"><g fill="none" stroke="#111" stroke-width="1.500"><ellipse cx="433.800" cy="24" rx="4.100" ry="3.600" transform="rotate(15 433.800 24)"/><path d="M426.800 27 C427.200 30.300 430.800 32 433.600 30.300 C435.400 29.200 435.900 27.400 435.400 26"/></g><path d="M430 23.500 C431.500 24.500 432.800 26 433.300 28 M431.300 22.800 C432.800 23.800 434 25.300 434.500 27.300" fill="none" stroke="#888" stroke-width="0.700"/><path d="M437.800 31.300 h4.400 l-2.200 2.600z" fill="#111"/></svg>
<svg class="a" style="left:448px;top:19px;" width="16" height="14" viewBox="448 19 16 14"><g stroke="#333" stroke-width="1"><path d="M449.600 24.800 L451.800 25.200 M462 24.800 L459.800 25.200 M450.500 28 L452.400 26.800 M461 28 L459.100 26.800 M452.700 29.600 L453.700 27.900 M458.800 29.600 L457.800 27.900 M455.800 30.200 V28.300"/></g><ellipse cx="455.800" cy="24.300" rx="3.800" ry="3.600" fill="#fff" stroke="#777" stroke-width="1.100"/></svg>
<div class="a" style="left:469px;top:23px;border:3.500px solid transparent;border-bottom:0;border-top:4px solid #111;"></div>
<div class="w btn" style="left:478px;top:15px;width:58px;height:21px;"><i class="cb"></i><i class="cbu" style="right:4.5px"></i><i class="cbd" style="right:4.5px"></i></div>
<div class="t" style="left:482px;top:20.500px;letter-spacing:-0.11px;">Axial</div>
<div class="w btn" style="left:537px;top:15px;width:425px;height:21px;"><i class="cb"></i><i class="cbu" style="right:4.5px"></i><i class="cbd" style="right:4.5px"></i></div>
<div class="t" style="left:541px;top:20.500px;letter-spacing:-0.26px;">VSD.Brain.XX.O.MR_Flair.35690.mha</div>

<div class="a" style="left:409.3px;top:37px;width:553px;height:282.6px;background:#000;"></div>
<svg class="a" style="left:409px;top:37px;" width="554" height="283" viewBox="409 37 554 283">
 <use href="#brain"/>
 <g id="ov1">
  <g filter="url(#sb)">
  <path d="M680.5 129.5 C682.1 127.5 684.8 126.2 687.0 125.0 C689.2 123.8 691.3 122.8 694.0 122.0 C696.7 121.2 700.0 120.0 703.0 120.5 C706.0 121.0 710.0 123.2 712.0 125.0 C714.0 126.8 713.2 129.2 715.0 131.0 C716.8 132.8 720.9 133.5 722.5 135.5 C724.1 137.5 724.6 139.8 724.7 143.0 C724.8 146.2 724.0 151.9 723.2 155.0 C722.5 158.1 721.6 159.8 720.2 161.7 C718.8 163.6 716.9 165.6 715.0 166.2 C713.1 166.8 711.0 164.9 709.0 165.5 C707.0 166.1 705.5 168.6 703.0 170.0 C700.5 171.4 696.5 173.4 694.0 173.7 C691.5 173.9 690.0 173.1 688.0 171.5 C686.0 169.9 683.9 166.2 682.0 164.0 C680.1 161.8 677.7 161.0 676.7 158.0 C675.7 155.0 675.9 149.5 676.0 146.0 C676.1 142.5 676.8 139.8 677.5 137.0 C678.2 134.2 678.9 131.5 680.5 129.5 Z" fill="#f8f23c"/>
  <ellipse cx="687.5" cy="117.5" rx="4.3" ry="4" fill="#f8f23c"/>
  <path d="M682.7 140.0 C683.2 137.9 684.6 135.6 686.5 134.7 C688.4 133.8 692.0 133.8 694.0 134.7 C696.0 135.6 696.5 139.0 698.5 140.0 C700.5 141.0 704.1 139.7 706.0 140.7 C707.9 141.7 709.0 144.1 709.7 146.0 C710.5 147.9 711.1 150.0 710.5 152.0 C709.9 154.0 707.0 155.8 706.0 158.0 C705.0 160.2 705.8 163.5 704.5 165.5 C703.2 167.5 700.8 169.2 698.5 170.0 C696.2 170.8 693.1 170.8 691.0 170.0 C688.9 169.2 686.7 168.0 685.7 165.5 C684.7 163.0 685.4 158.0 685.0 155.0 C684.6 152.0 683.9 150.0 683.5 147.5 C683.1 145.0 682.2 142.1 682.7 140.0 Z" fill="#1212dc"/>
  <ellipse cx="697" cy="157.2" rx="5" ry="5.6" transform="rotate(-25 697 157.2)" fill="#30d84c"/>
  <circle cx="708.2" cy="153.5" r="1.8" fill="#30c84c"/>
  </g>
  <circle cx="690.2" cy="140.7" r="1.3" fill="#c8307a"/><circle cx="708.2" cy="139.2" r="1" fill="#b8302a"/><circle cx="710" cy="146" r="1" fill="#b8402a"/><circle cx="681" cy="158.5" r="0.9" fill="#b8402a"/><circle cx="683" cy="162" r="0.8" fill="#b8402a"/>
  <path d="M717 144.5 L721 141.5" stroke="#55501a" stroke-width="0.8"/>
  <circle cx="679" cy="146" r="0.6" fill="#333"/><circle cx="680" cy="151" r="0.6" fill="#333"/>
 </g>
</svg>
<div class="vt" style="left:413px;top:279px;letter-spacing:-0.08px;">L: VSD.Brain_3more.XX.O....2385.mha_Label (</div>
<div class="vt" style="left:413px;top:291px;letter-spacing:-0.17px;">B: VSD.Brain.XX.O.MR_Flair.35690.mha</div>

<!-- slice 2 : Yellow -->
<div class="a" style="left:409px;top:320.200px;width:553.400px;height:12.400px;background:linear-gradient(#e8c83a,#f4d83c 40%,#f6dc3e);"></div>
<div class="a" style="left:421px;top:320.200px;width:11px;height:12.400px;background:#fbe98c;"></div>
<div class="a" style="left:905px;top:320.200px;width:57.400px;height:12.400px;background:#fbe98c;"></div>
<div class="a" style="left:410px;top:321px;width:11px;height:11px;border:1px solid #9a9a9a;border-radius:2px;background:linear-gradient(#f4f4f4,#d8d8d8);"></div>
<svg class="a" style="left:410px;top:321.500px;" width="11" height="10" viewBox="0 0 11 10"><path d="M5.500 2 V6 M4 4.800 L5.500 6.800 L7 4.800 M4 8 H7" fill="none" stroke="#222" stroke-width="0.900"/></svg>
<div class="t" style="left:424px;top:322px;font-size:8px;line-height:10px;color:#141004;-webkit-text-stroke:0;">Y</div>
<svg class="a" style="left:434px;top:321.500px;" width="11" height="11" viewBox="0 0 11 11"><g stroke="#7a6408" stroke-width="1"><path d="M5.500 0.500 V10.500 M0.800 5.500 H10.200 M2 2 L9 9 M9 2 L2 9"/></g><circle cx="5.500" cy="5.500" r="3" fill="#6c5606"/><circle cx="4.500" cy="4.500" r="1.200" fill="#c4a42a"/></svg>
<div class="a" style="left:451px;top:324.500px;width:452px;height:4px;background:#eef2ea;border-top:1px solid #b9c6c8;border-radius:1px;"></div>
<div class="a" style="left:451px;top:324.500px;width:224px;height:4px;background:#6ca8dc;border-top:1px solid #4b86c2;border-bottom:1px solid #8ec0ea;box-sizing:border-box;border-radius:1px;"></div>
<div class="a" style="left:671.600px;top:321.300px;width:8px;height:10px;border:1px solid #a9a9a9;border-radius:2px;background:linear-gradient(90deg,#fff,#e4e4e4 50%,#fff);"></div>
<div class="t" style="left:907px;top:322.500px;font-size:8.500px;color:#2a2410;letter-spacing:-0.32px;">S: 77.000mm</div>

<div class="t" style="left:410.6px;top:338.2px;font-size:12.5px;line-height:12px;letter-spacing:0;color:#000;-webkit-text-stroke:0.3px #000;">»</div>
<svg class="a" style="left:424px;top:337.5px;" width="20" height="16" viewBox="424 19 20 16"><g fill="none" stroke="#111" stroke-width="1.500"><ellipse cx="433.800" cy="24" rx="4.100" ry="3.600" transform="rotate(15 433.800 24)"/><path d="M426.800 27 C427.200 30.300 430.800 32 433.600 30.300 C435.400 29.200 435.900 27.400 435.400 26"/></g><path d="M430 23.500 C431.500 24.500 432.800 26 433.300 28 M431.300 22.800 C432.800 23.800 434 25.300 434.500 27.300" fill="none" stroke="#888" stroke-width="0.700"/><path d="M437.800 31.300 h4.400 l-2.200 2.600z" fill="#111"/></svg>
<svg class="a" style="left:448px;top:337.5px;" width="16" height="14" viewBox="448 19 16 14"><g stroke="#333" stroke-width="1"><path d="M449.600 24.800 L451.800 25.200 M462 24.800 L459.800 25.200 M450.500 28 L452.400 26.800 M461 28 L459.100 26.800 M452.700 29.600 L453.700 27.900 M458.800 29.600 L457.800 27.900 M455.800 30.200 V28.300"/></g><ellipse cx="455.800" cy="24.300" rx="3.800" ry="3.600" fill="#fff" stroke="#777" stroke-width="1.100"/></svg>
<div class="a" style="left:469px;top:341.500px;border:3.500px solid transparent;border-bottom:0;border-top:4px solid #111;"></div>
<div class="w btn" style="left:478px;top:334px;width:58px;height:20px;"><i class="cb"></i><i class="cbu" style="right:4.5px"></i><i class="cbd" style="right:4.5px"></i></div>
<div class="t" style="left:482px;top:339px;letter-spacing:-0.11px;">Axial</div>
<div class="w btn" style="left:537px;top:334px;width:425px;height:20px;"><i class="cb"></i><i class="cbu" style="right:4.5px"></i><i class="cbd" style="right:4.5px"></i></div>
<div class="t" style="left:541px;top:339px;letter-spacing:-0.26px;">VSD.Brain.XX.O.MR_Flair.35690.mha</div>

<div class="a" style="left:409.3px;top:355px;width:553px;height:294.7px;background:#000;"></div>
<svg class="a" style="left:409px;top:355px;" width="554" height="295" viewBox="409 30 554 295">
 <use href="#brain"/>
 <g id="ov2">
  <g filter="url(#sb)">
  <path d="M683.5 131.0 C683.7 128.4 688.2 125.8 691.0 124.2 C693.8 122.6 697.0 121.3 700.0 121.2 C703.0 121.1 706.5 122.1 709.0 123.5 C711.5 124.9 713.6 127.2 715.0 129.5 C716.4 131.8 716.7 134.8 717.2 137.0 C717.7 139.2 717.4 141.8 718.0 143.0 C718.6 144.2 720.4 142.5 721.0 144.5 C721.6 146.5 722.2 152.1 721.7 155.0 C721.2 157.9 719.6 160.2 718.0 161.7 C716.4 163.2 714.2 163.6 712.0 164.0 C709.8 164.4 707.0 166.3 705.0 164.0 C703.0 161.7 702.5 154.0 700.0 150.0 C697.5 146.0 692.8 143.2 690.0 140.0 C687.2 136.8 683.3 133.6 683.5 131.0 Z" fill="#f8f23c"/>
  <path d="M690 170.500 C694 173 700 172.500 704 169" fill="none" stroke="#b030c0" stroke-width="1.600"/>
  <path d="M682.0 134.0 C683.2 132.0 687.0 131.8 689.5 131.0 C692.0 130.2 694.2 129.2 697.0 129.5 C699.8 129.8 703.5 131.0 706.0 132.5 C708.5 134.0 710.8 136.5 712.0 138.5 C713.2 140.5 714.0 142.8 713.5 144.5 C713.0 146.2 710.0 146.8 709.0 149.0 C708.0 151.2 708.0 155.2 707.5 158.0 C707.0 160.8 707.2 163.5 706.0 165.5 C704.8 167.5 702.0 169.0 700.0 170.0 C698.0 171.0 696.2 171.8 694.0 171.5 C691.8 171.2 688.1 170.2 686.5 168.5 C684.9 166.8 684.5 164.0 684.2 161.0 C684.0 158.0 685.4 153.5 685.0 150.5 C684.6 147.5 682.5 145.8 682.0 143.0 C681.5 140.2 680.8 136.0 682.0 134.0 Z" fill="#1212dc"/>
  <ellipse cx="696.2" cy="155.7" rx="5.3" ry="5.5" fill="#30e03c"/>
  <circle cx="709" cy="152" r="2.800" fill="#30d84c"/><circle cx="689.500" cy="138.500" r="2.200" fill="#30c86c"/>
  </g>
  <path d="M694 128 C700 125.500 707 127 711 132 C713.500 135 714.500 139 715 143" fill="none" stroke="#a02838" stroke-width="1.300"/>
  <path d="M699 128.500 C703 127.500 707 129.500 709 133" fill="none" stroke="#f0d0e0" stroke-width="0.900"/>
  <circle cx="700" cy="134" r="0.700" fill="#fff"/><circle cx="703.500" cy="136" r="0.700" fill="#fff"/><circle cx="706" cy="133.500" r="0.700" fill="#fff"/><circle cx="702" cy="139" r="0.600" fill="#fff"/><circle cx="697" cy="150" r="0.600" fill="#fff"/><circle cx="703" cy="149" r="0.600" fill="#fff"/><circle cx="692" cy="147" r="0.600" fill="#fff"/><circle cx="698" cy="164" r="0.600" fill="#fff"/>
  <circle cx="679.500" cy="142" r="1.100" fill="#30d84c"/><circle cx="681" cy="146.500" r="1.100" fill="#f8f23c"/><circle cx="679" cy="150" r="0.900" fill="#fff"/><circle cx="680.500" cy="153.500" r="1" fill="#c03028"/><circle cx="682.500" cy="157" r="1.100" fill="#f8f23c"/><circle cx="681" cy="160" r="1" fill="#30d84c"/><circle cx="683" cy="149" r="1" fill="#30d84c"/><circle cx="678" cy="156" r="0.900" fill="#f8f23c"/><circle cx="684" cy="163" r="0.900" fill="#c8307a"/>
 </g>
</svg>
<div class="vt" style="left:413px;top:611px;letter-spacing:0.08px;">L: processed_3dFilter_Label (100%)</div>
<div class="vt" style="left:413px;top:623.500px;letter-spacing:-0.17px;">B: VSD.Brain.XX.O.MR_Flair.35690.mha</div>


</div></body></html>
